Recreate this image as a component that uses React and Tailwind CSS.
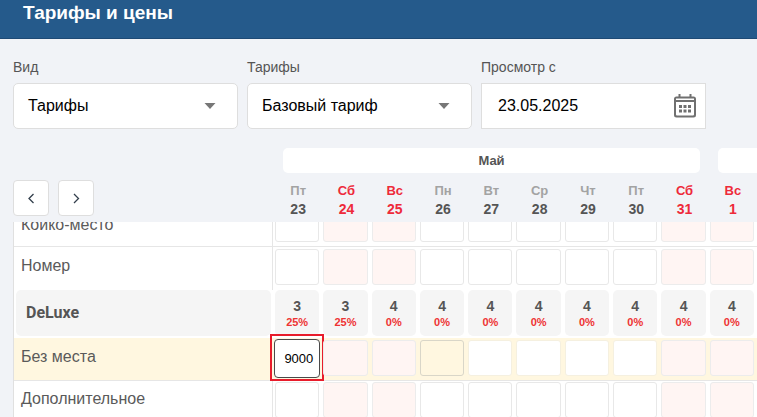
const days = [
  ["Пт", "23", 0], ["Сб", "24", 1], ["Вс", "25", 1], ["Пн", "26", 0], ["Вт", "27", 0],
  ["Ср", "28", 0], ["Чт", "29", 0], ["Пт", "30", 0], ["Сб", "31", 1], ["Вс", "1", 1],
];
const font = { fontFamily: '"Liberation Sans", Arial, sans-serif' };

function Caret() {
  return (
    <svg width="12" height="6" viewBox="0 0 12 6">
      <path d="M0.5 0h11L6 6z" fill="#777" />
    </svg>
  );
}

function Select({ label, value }) {
  return (
    <div className="w-[225px]">
      <div className="text-[14px] leading-[18px] text-[#555] mb-[7px]">{label}</div>
      <div className="h-[46px] bg-white border border-[#dedede] rounded-[5px] flex items-center justify-between pl-[14px] pr-[21px] text-[16px] text-black">
        <span>{value}</span>
        <Caret />
      </div>
    </div>
  );
}

function Row({ label, selected, yellow, top, lift, noLine }) {
  return (
    <div className={`flex h-[43px] ${noLine ? "" : "border-b border-[#e6e6e6]"} ${yellow ? "bg-[#fff7e0]" : ""}`}>
      <div
        className={`w-[259px] shrink-0 flex items-center pl-[7px] text-[16px] text-[#5a5a5a] ${yellow ? "" : "border-r border-[#e6e6e6]"}`}
        style={{ paddingBottom: lift }}
      >
        {label}
      </div>
      <div className="grid grid-cols-[repeat(10,48.3px)] items-start" style={{ paddingTop: top }}>
        {days.map((d, i) => {
          const sel = selected && i === 0;
          const active = selected && i === 3;
          return (
            <div key={i} className="px-[2px] relative">
              {sel ? (
                <div className="relative h-[36px]">
                  <div className="absolute -left-[5px] -right-[5px] -top-[5px] -bottom-[6px] border-2 border-[#e81c2b] pointer-events-none" />
                  <div className="h-[39px] -mt-[1px] -mx-[1px] bg-white border border-[#4a4a4a] rounded-[4px] flex items-center justify-end pr-[6px] text-[13px] text-black">9000</div>
                </div>
              ) : (
                <div
                  className={`h-[36px] border rounded-[3px] ${
                    active
                      ? "bg-[#fff7e0] border-[#d9d6c8]"
                      : d[2]
                      ? "bg-[#fff5f3] border-[#ececec]"
                      : yellow
                      ? "bg-white border-[#f5f0e0]"
                      : "bg-white border-[#e8e8e8]"
                  }`}
                />
              )}
            </div>
          );
        })}
      </div>
    </div>
  );
}

export default function App() {
  return (
    <div className="w-[757px] h-[417px] overflow-hidden bg-[#f1f3f7] flex flex-col" style={font}>
      <div className="h-[39px] shrink-0 bg-[#255a8b] border-b border-[#1e4a75] pl-[23px] pt-[1px]">
        <h1 className="text-[19px] leading-[24px] font-bold text-white">Тарифы и цены</h1>
      </div>

      <div className="flex gap-[9px] pl-[13px] pt-[19px] shrink-0">
        <Select label="Вид" value="Тарифы" />
        <Select label="Тарифы" value="Базовый тариф" />
        <div className="w-[225px]">
          <div className="text-[14px] leading-[18px] text-[#555] mb-[7px]">Просмотр с</div>
          <div className="h-[46px] bg-white border border-[#dedede] flex items-center justify-between pl-[16px] pr-[9px] text-[16px] text-black">
            <span>23.05.2025</span>
            <svg width="22" height="24" viewBox="0 0 22 24" fill="#707070">
              <path fillRule="evenodd" d="M4.5 0h2v2.5h9V0h2v2.5h2A2.5 2.5 0 0 1 22 5v16a2.5 2.5 0 0 1-2.5 2.5h-17A2.5 2.5 0 0 1 0 21V5a2.5 2.5 0 0 1 2.5-2.5h2zM2 4.5V6h18V4.5zM2 8V20.5A1 1 0 0 0 3 21.5H19A1 1 0 0 0 20 20.5V8z" />
              <path d="M5 11h3v3H5zM9.5 11h3v3h-3zM14 11h3v3h-3zM5 15.5h3v3H5zM9.5 15.5h3v3h-3zM14 15.5h3v3h-3z" />
            </svg>
          </div>
        </div>
      </div>

      <div className="flex pl-[13px] shrink-0 h-[93px]">
        <div className="w-[260px] shrink-0 flex gap-[9px] items-start pt-[51px]">
          {["M5.5 1 1 5.5 5.5 10", "M1 1 5.5 5.5 1 10"].map((d) => (
            <div key={d} className="w-[36px] h-[36px] bg-white border border-[#dedede] rounded-[4px] flex items-center justify-center">
              <svg width="7" height="11" viewBox="0 0 7 11" fill="none" stroke="#333f4c" strokeWidth="1.3"><path d={d} /></svg>
            </div>
          ))}
        </div>
        <div className="pt-[19px] flex-1">
          <div className="flex gap-[18px] pl-[10px]">
            <div className="w-[417px] h-[25px] shrink-0 bg-white rounded-[5px] flex items-center justify-center text-[13px] font-bold text-[#555]">Май</div>
            <div className="w-[60px] h-[25px] shrink-0 bg-white rounded-[5px]" />
          </div>
          <div className="grid grid-cols-[repeat(10,48.3px)] pl-[1px] pt-[9px] text-center font-bold text-[14px] leading-[18px]">
            {days.map((d, i) => (
              <div key={i}>
                <div className={`text-[13px] ${d[2] ? "text-[#ee2a3a]" : "text-[#a3a3a3]"}`}>{d[0]}</div>
                <div className={d[2] ? "text-[#ee2a3a]" : "text-[#555]"}>{d[1]}</div>
              </div>
            ))}
          </div>
        </div>
      </div>

      <div className="flex-1 overflow-hidden ml-[13px] bg-white border-l border-[#e0e0e0]">
        <div className="-mt-[18px]">
          <Row label="Койко-место" top={2} lift={1} />
          <Row label="Номер" top={2} lift={6} noLine />
          <div className="flex h-[48px] items-start bg-white">
            <div className="w-[259px] shrink-0 h-[46px] px-[2px]">
              <div className="h-full bg-[#f5f5f5] rounded-[5px] flex items-center pl-[10px] text-[16px] font-bold text-[#555]" style={{ fontFamily: "Roboto, sans-serif" }}>DeLuxe</div>
            </div>
            <div className="grid grid-cols-[repeat(10,48.3px)]">
              {days.map((d, i) => (
                <div key={i} className="px-[2px]">
                  <div className="h-[46px] bg-[#f5f5f5] rounded-[5px] flex flex-col items-center justify-center gap-[2px] text-center">
                    <div className="text-[14px] leading-[16px] font-bold text-[#555]">{i < 2 ? 3 : 4}</div>
                    <div className="text-[11px] leading-[12px] font-bold text-[#ee3333]">{i < 2 ? "25%" : "0%"}</div>
                  </div>
                </div>
              ))}
            </div>
          </div>
          <Row label="Без места" yellow selected top={2} lift={4} />
          <Row label="Дополнительное" top={1} lift={6} />
        </div>
      </div>
    </div>
  );
}
